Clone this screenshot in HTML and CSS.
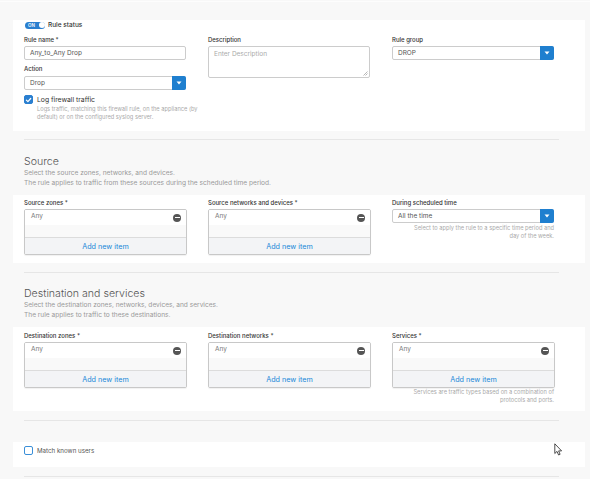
FILE: index.html
```html
<!DOCTYPE html>
<html>
<head>
<meta charset="utf-8">
<link rel="stylesheet" href="styles.css">
</head>
<body>
<div class="page">
  <div class="panel panel-general">
    <div class="status-row">
      <span class="toggle"><span class="toggle-text">ON</span><span class="knob"></span></span>
      <span class="status-label">Rule status</span>
    </div>
    <div class="grid">
      <div class="col">
        <div class="label">Rule name *</div>
        <div class="input"><span class="value">Any_to_Any Drop</span></div>
        <div class="label label-action">Action</div>
        <div class="select"><span class="value">Drop</span><span class="sel-btn"><svg width="6" height="4" viewBox="0 0 6 4"><path d="M0.5 0.5 L5.5 0.5 L3 3.5 Z" fill="#fff"/></svg></span></div>
        <div class="check-row">
          <span class="checkbox checked"><svg width="8" height="8" viewBox="0 0 8 8"><path d="M1.6 4.1 L3.3 5.8 L6.5 2.3" fill="none" stroke="#fff" stroke-width="1.4" stroke-linecap="round" stroke-linejoin="round"/></svg></span>
          <span class="check-label">Log firewall traffic</span>
        </div>
        <div class="help help-left">Logs traffic, matching this firewall rule, on the appliance (by default) or on the configured syslog server.</div>
      </div>
      <div class="col">
        <div class="label">Description</div>
        <div class="textarea"><span class="placeholder">Enter Description</span>
          <svg class="grip" width="5" height="5" viewBox="0 0 5 5"><path d="M4.5 0.5 L0.5 4.5 M4.5 2.5 L2.5 4.5" stroke="#999" stroke-width="0.7"/></svg>
        </div>
      </div>
      <div class="col">
        <div class="label">Rule group</div>
        <div class="select"><span class="value">DROP</span><span class="sel-btn"><svg width="6" height="4" viewBox="0 0 6 4"><path d="M0.5 0.5 L5.5 0.5 L3 3.5 Z" fill="#fff"/></svg></span></div>
      </div>
    </div>
  </div>

  <div class="sep"></div>

  <div class="section-head">
    <div class="title">Source</div>
    <div class="desc">Select the source zones, networks, and devices.</div>
    <div class="desc">The rule applies to traffic from these sources during the scheduled time period.</div>
  </div>

  <div class="panel panel-source">
    <div class="grid">
      <div class="col">
        <div class="label">Source zones *</div>
        <div class="list">
          <div class="list-item"><span>Any</span><span class="minus"></span></div>
          <div class="list-space"></div>
          <div class="list-add">Add new item</div>
        </div>
      </div>
      <div class="col">
        <div class="label">Source networks and devices *</div>
        <div class="list">
          <div class="list-item"><span>Any</span><span class="minus"></span></div>
          <div class="list-space"></div>
          <div class="list-add">Add new item</div>
        </div>
      </div>
      <div class="col">
        <div class="label">During scheduled time</div>
        <div class="select"><span class="value">All the time</span><span class="sel-btn"><svg width="6" height="4" viewBox="0 0 6 4"><path d="M0.5 0.5 L5.5 0.5 L3 3.5 Z" fill="#fff"/></svg></span></div>
        <div class="help help-right help-sched">Select to apply the rule to a specific time period and<br>day of the week.</div>
      </div>
    </div>
  </div>

  <div class="sep"></div>

  <div class="section-head section-dest">
    <div class="title">Destination and services</div>
    <div class="desc">Select the destination zones, networks, devices, and services.</div>
    <div class="desc">The rule applies to traffic to these destinations.</div>
  </div>

  <div class="panel panel-dest">
    <div class="grid">
      <div class="col">
        <div class="label">Destination zones *</div>
        <div class="list">
          <div class="list-item"><span>Any</span><span class="minus"></span></div>
          <div class="list-space"></div>
          <div class="list-add">Add new item</div>
        </div>
      </div>
      <div class="col">
        <div class="label">Destination networks *</div>
        <div class="list">
          <div class="list-item"><span>Any</span><span class="minus"></span></div>
          <div class="list-space"></div>
          <div class="list-add">Add new item</div>
        </div>
      </div>
      <div class="col">
        <div class="label">Services *</div>
        <div class="list">
          <div class="list-item"><span>Any</span><span class="minus"></span></div>
          <div class="list-space"></div>
          <div class="list-add">Add new item</div>
        </div>
        <div class="help help-right">Services are traffic types based on a combination of<br>protocols and ports.</div>
      </div>
    </div>
  </div>

  <div class="sep"></div>

  <div class="panel panel-users">
    <div class="check-row">
      <span class="checkbox"></span>
      <span class="users-label">Match known users</span>
    </div>
    <svg class="cursor" width="9" height="13" viewBox="0 0 9 13"><path d="M0.8 0.8 L0.8 10.5 L3 8.4 L4.6 12 L6.1 11.3 L4.6 7.9 L7.6 7.9 Z" fill="#fff" stroke="#222" stroke-width="0.8" stroke-linejoin="round"/></svg>
  </div>

  <div class="sep"></div>
</div>
</body>
</html>
```

FILE: styles.css
```css
html, body {
  margin: 0;
  padding: 0;
}
body {
  background: #f8f8f8;
  font-family: Inter, "Liberation Sans", sans-serif;
  color: #333;
  width: 590px;
  height: 479px;
  overflow: hidden;
}
.page {
  border-top: 1px solid #fdfdfd;
  margin-top: 1px;
  padding-top: 18px;
  position: relative;
}
.panel {
  background: #fff;
  margin-left: 13px;
  width: 572px;
  box-sizing: border-box;
  padding: 0 11px;
  position: relative;
}
.panel-general {
  height: 111px;
  padding-top: 1px;
}
.status-row {
  display: flex;
  align-items: center;
  height: 8px;
  margin-left: 1px;
}
.toggle {
  width: 20px;
  height: 7px;
  border-radius: 4px;
  background: #2a7fcf;
  position: relative;
  display: inline-block;
}
.toggle-text {
  position: absolute;
  left: 3px;
  top: 0;
  font-size: 4.5px;
  line-height: 7px;
  color: #fff;
  font-weight: 600;
}
.knob {
  position: absolute;
  right: 0.5px;
  top: 0.5px;
  width: 6px;
  height: 6px;
  border-radius: 50%;
  background: #fff;
}
.status-label {
  font-size: 6.5px;
  margin-left: 3px;
  color: #333;
  font-weight: 500;
}
.grid {
  display: grid;
  grid-template-columns: 162px 162px 162px;
  column-gap: 22px;
}
.panel-general .grid {
  margin-top: 6px;
}
.label {
  font-size: 6px;
  font-weight: 500;
  line-height: 9px;
  color: #333;
  margin-bottom: 2px;
}
.label-action {
  margin-top: 4px;
  margin-bottom: 3px;
}
.input, .select {
  height: 12px;
  border: 1px solid #ccc;
  border-radius: 2px;
  box-sizing: content-box;
  display: flex;
  align-items: center;
  position: relative;
  background: #fff;
}
.input {
  width: 160px;
}
.select {
  width: 160px;
  height: 12px;
}
.value {
  font-size: 6.5px;
  color: #555;
  padding-left: 5px;
}
.sel-btn {
  position: absolute;
  right: -1px;
  top: -1px;
  width: 14px;
  height: 14px;
  background: #1f7fcf;
  border-radius: 0 2px 2px 0;
  display: flex;
  align-items: center;
  justify-content: center;
}
.check-row {
  display: flex;
  align-items: center;
  margin-top: 5px;
}
.checkbox {
  width: 9px;
  height: 9px;
  box-sizing: border-box;
  border: 1px solid #3a8fd8;
  border-radius: 2px;
  display: inline-flex;
  align-items: center;
  justify-content: center;
  background: #fff;
}
.checkbox.checked {
  background: #2a7fd0;
  border-color: #2a7fd0;
}
.check-label {
  font-size: 6.8px;
  margin-left: 4px;
  color: #333;
}
.help {
  font-size: 5.7px;
  line-height: 8px;
  color: #aaa;
}
.help-left {
  margin-left: 13px;
  margin-top: 1px;
  width: 166px;
}
.help-right {
  text-align: right;
  width: 162px;
  margin-top: 0;
}
.help-sched {
  margin-top: 1px;
}
.textarea {
  height: 30px;
  border: 1px solid #ccc;
  border-radius: 2px;
  position: relative;
  background: #fff;
}
.placeholder {
  font-size: 6.5px;
  color: #aaa;
  position: absolute;
  left: 5px;
  top: 3px;
}
.grip {
  position: absolute;
  right: 1px;
  bottom: 1px;
}
.sep {
  height: 1px;
  background: #e6e6e6;
  margin: 8px 31px 0 24px;
}
.panel-source + .sep,
.panel-dest + .sep,
.panel-users + .sep {
  margin-top: 9px;
}
.section-head {
  padding-left: 24px;
  margin-top: 15px;
}
.section-dest {
  margin-top: 14px;
}
.title {
  font-size: 10.6px;
  font-weight: 300;
  color: #555;
  line-height: 14px;
}
.desc {
  font-size: 6.6px;
  color: #999;
  line-height: 9.5px;
}
.panel-source {
  margin-top: 7px;
  height: 68px;
  padding-top: 3px;
}
.panel-dest {
  margin-top: 7px;
  height: 84px;
  padding-top: 4px;
}
.list {
  border: 1px solid #c8c8c8;
  border-radius: 2px;
  width: 161px;
  box-shadow: 0 1px 1px rgba(0,0,0,0.06);
  overflow: hidden;
  background: #fff;
}
.list-item {
  height: 15px;
  display: flex;
  justify-content: space-between;
  align-items: center;
  padding: 0 5px 0 6px;
  font-size: 6.5px;
  color: #777;
  background: #fff;
}
.list-item span:first-child {
  align-self: flex-start;
  margin-top: 2px;
}
.minus {
  width: 8px;
  height: 8px;
  border-radius: 50%;
  background: #555;
  position: relative;
}
.minus::after {
  content: "";
  position: absolute;
  left: 1.5px;
  right: 1.5px;
  top: 3.2px;
  height: 1.6px;
  background: #fff;
}
.list-space {
  height: 12px;
  background: #f9f9f9;
  border-bottom: 1px solid #dcdcdc;
}
.list-add {
  height: 16px;
  background: #f3f4f6;
  color: #2188d8;
  font-size: 7.2px;
  display: flex;
  align-items: center;
  justify-content: center;
}
.panel-users {
  margin-top: 21px;
  height: 25px;
  display: flex;
  align-items: flex-start;
}
.panel-users .check-row {
  margin-top: 4px;
}
.users-label {
  font-size: 6.2px;
  color: #555;
  margin-left: 4px;
}
.cursor {
  position: absolute;
  left: 541px;
  top: 1px;
}
```
